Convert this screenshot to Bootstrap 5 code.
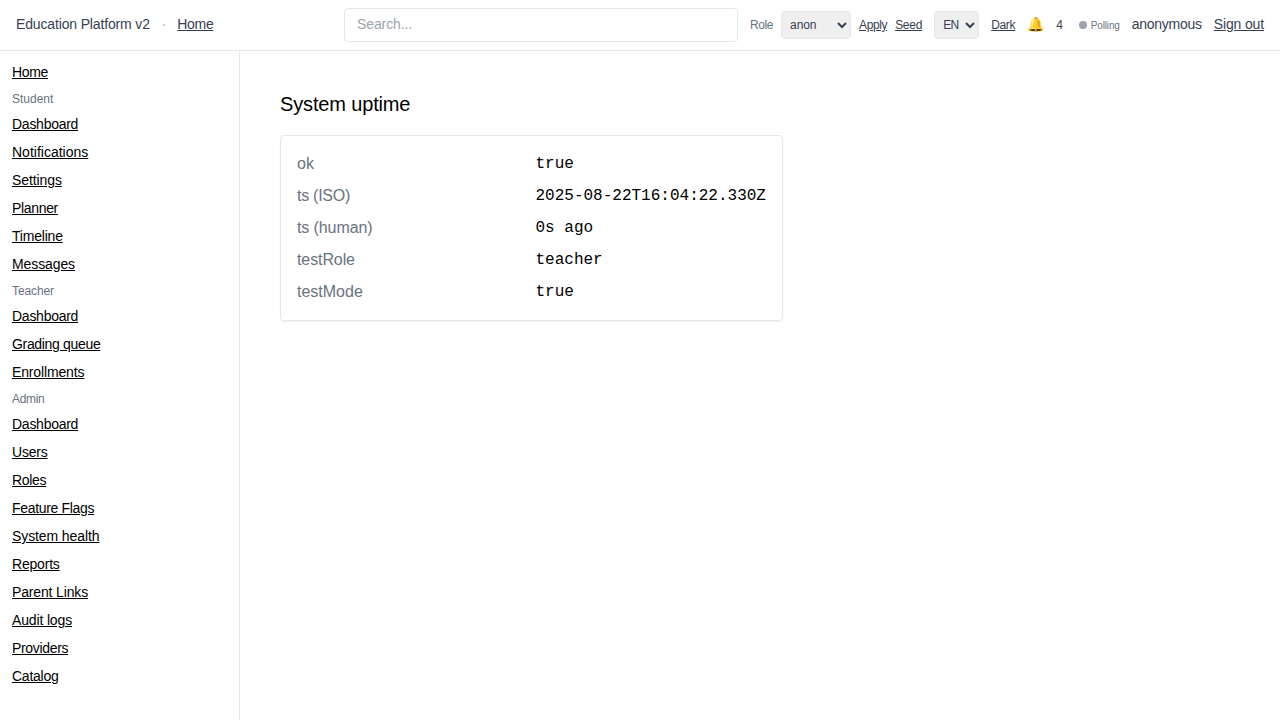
<!DOCTYPE html>
<html lang="en">
<head>
<meta charset="utf-8">
<meta name="viewport" content="width=device-width, initial-scale=1">
<title>System uptime</title>
<link href="https://cdn.jsdelivr.net/npm/bootstrap@5.3.0/dist/css/bootstrap.min.css" rel="stylesheet">
<style>
body{font-family:"Liberation Sans",Arial,sans-serif;font-size:16px;line-height:24px;color:#000;background:#fff}
a{color:inherit;text-decoration:underline}
a:hover{color:inherit}
.t1{letter-spacing:-.1px}.t15{letter-spacing:-.15px}.t2{letter-spacing:-.2px}.t25{letter-spacing:-.26px}.t3{letter-spacing:-.33px}.t4{letter-spacing:-.4px}
.topbar{height:51px;border-bottom:1px solid #e5e7eb;color:#374151;font-size:14px;line-height:20px}
.brand-area{width:328px;gap:12px}
.bar-text{line-height:18px;padding-bottom:2px}
.dot-sep{color:#9ca3af;width:3.5px;text-align:center}
.search{width:394px;height:34px;border:1px solid #e5e7eb;border-radius:4px;padding:5px 12px 7px;font-size:14px;line-height:20px}
.search::placeholder{color:#9ca3af;opacity:1}
.actions{gap:12px;padding-left:12px}
.tiny{font-size:12px;line-height:16px}
.muted{color:#6b7280}
.pick{height:28px;border:1px solid #e5e7eb;border-radius:4px;background:#efefef;color:#374151;font-size:12px;line-height:16px;padding:4px}
.pick-role{width:70px}
.pick-lang{width:45px;padding-right:1px;letter-spacing:-.7px}
.bell{width:17px}
.count{width:11px}
.polling{width:40.5px;font-size:10px;line-height:15px;gap:4px}
.status-dot{width:8px;height:8px;background:#9ca3af}
.side{width:240px;min-height:669px;border-right:1px solid #e5e7eb;padding:12px;font-size:14px}
.side a{display:block;width:max-content;line-height:18px;margin-bottom:10px}
.side h2{font-size:12px;line-height:16px;font-weight:400;color:#6b7280;margin:0 0 8px}
.page{padding:40px}
.page h1{font-size:20px;line-height:26px;font-weight:400;margin:0 0 18px}
.panel{width:503px;border:1px solid #e5e7eb;border-radius:4px;padding:16px;box-shadow:0 1px 2px rgba(0,0,0,.05)}
.facts{display:grid;grid-template-columns:1fr 1fr;gap:8px;margin:0}
.facts dt{font-weight:400;color:#6b7280}
.facts dd{margin:0;font-family:"Liberation Mono",monospace}
</style>
</head>
<body>
<header class="topbar d-flex align-items-center px-3">
  <div class="brand-area d-flex align-items-center flex-shrink-0"><span class="bar-text t15">Education Platform v2</span><span class="bar-text dot-sep">·</span><a href="#" class="bar-text t3">Home</a></div>
  <input class="search flex-shrink-0 t1" type="text" placeholder="Search...">
  <div class="actions d-flex align-items-center justify-content-between flex-grow-1 text-nowrap">
    <div class="d-flex align-items-center gap-2 tiny"><span class="muted t4">Role</span><select class="pick pick-role t1"><option>anon</option></select><a href="#" class="t4">Apply</a><a href="#" class="t25">Seed</a></div>
    <select class="pick pick-lang"><option>EN</option></select>
    <a href="#" class="tiny t3">Dark</a>
    <span class="bell bar-text">🔔</span>
    <span class="tiny count">4</span>
    <span class="polling muted d-flex align-items-center t15"><span class="status-dot rounded-circle"></span>Polling</span>
    <span class="bar-text t25">anonymous</span>
    <a href="#" class="bar-text t15">Sign out</a>
  </div>
</header>
<div class="d-flex">
  <nav class="side flex-shrink-0">
    <a href="#" class="t3">Home</a>
    <h2>Student</h2>
    <a href="#" class="t25">Dashboard</a><a href="#">Notifications</a><a href="#" class="t1">Settings</a><a href="#" class="t3">Planner</a><a href="#" class="t2">Timeline</a><a href="#" class="t1">Messages</a>
    <h2 class="t1">Teacher</h2>
    <a href="#" class="t25">Dashboard</a><a href="#" class="t3">Grading queue</a><a href="#" class="t15">Enrollments</a>
    <h2 class="t3">Admin</h2>
    <a href="#" class="t25">Dashboard</a><a href="#" class="t2">Users</a><a href="#" class="t3">Roles</a><a href="#" class="t3">Feature Flags</a><a href="#" class="t1">System health</a><a href="#" class="t2">Reports</a><a href="#" class="t15">Parent Links</a><a href="#" class="t15">Audit logs</a><a href="#" class="t3">Providers</a><a href="#" class="t25">Catalog</a>
  </nav>
  <main class="page">
    <h1 class="t15">System uptime</h1>
    <section class="panel">
      <dl class="facts"><dt>ok</dt><dd>true</dd><dt class="t25">ts (ISO)</dt><dd>2025-08-22T16:04:22.330Z</dd><dt class="t1">ts (human)</dt><dd>0s ago</dd><dt class="t1">testRole</dt><dd>teacher</dd><dt>testMode</dt><dd>true</dd></dl>
    </section>
  </main>
</div>
<script src="https://cdn.jsdelivr.net/npm/bootstrap@5.3.0/dist/js/bootstrap.bundle.min.js"></script>
</body>
</html>
